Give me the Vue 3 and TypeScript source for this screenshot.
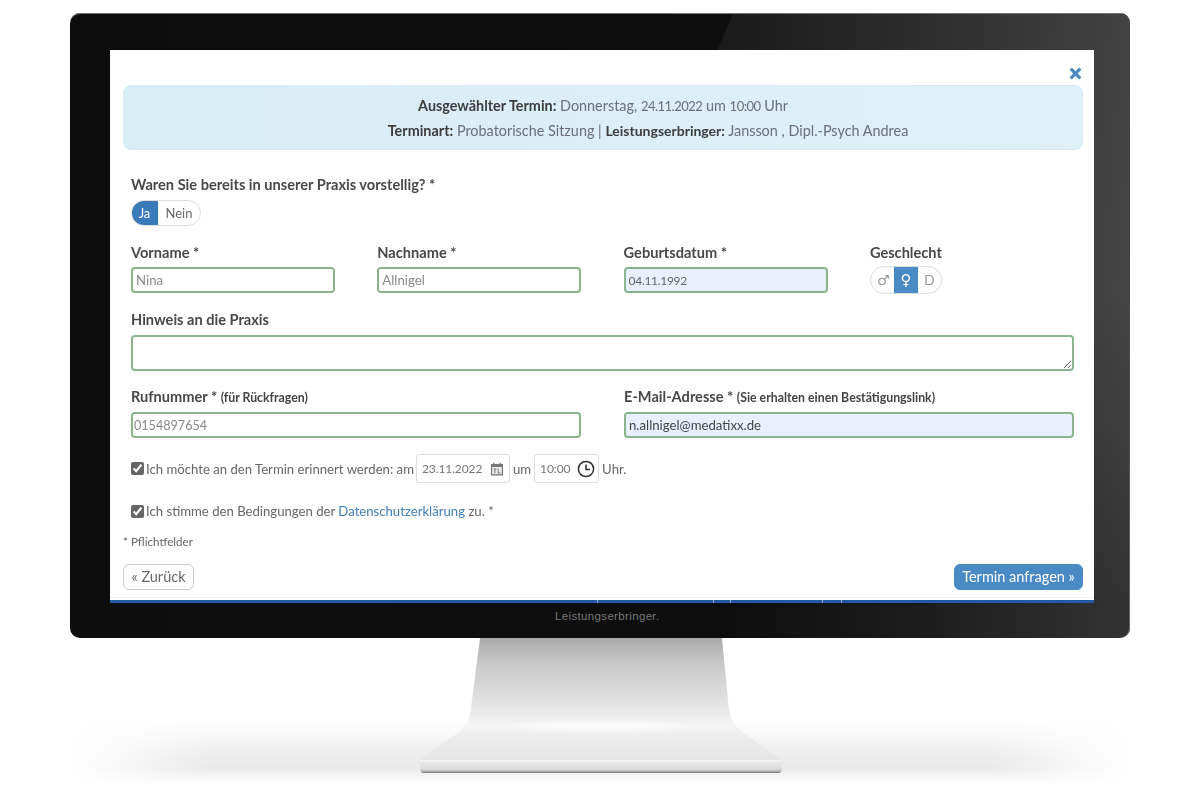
<script setup lang="ts">
const firstRow = [
  { label: 'Vorname *', value: 'Nina', filled: false, date: false },
  { label: 'Nachname *', value: 'Allnigel', filled: false, date: false },
  { label: 'Geburtsdatum *', value: '04.11.1992', filled: true, date: true },
]
const ticks = [487, 603, 620, 712, 731]
</script>

<template>
  <div class="page">
    <div class="desk-shadow"></div>
    <div class="monitor">
      <div class="glare"></div>
      <main class="screen">
        <div class="close-row">
          <svg class="close" viewBox="0 0 14 14" aria-label="Schließen">
            <path d="M1.5 3.6 3.6 1.5 7 4.9 10.4 1.5 12.5 3.6 9.1 7 12.5 10.4 10.4 12.5 7 9.1 3.6 12.5 1.5 10.4 4.9 7 1.5 3.6Z" />
          </svg>
        </div>
        <section class="alert">
          <p><b>Ausgewählter Termin:</b> Donnerstag, <span class="num">24.11.2022</span> um <span class="num">10:00</span> Uhr</p>
          <p class="second"><b>Terminart:</b> Probatorische Sitzung | <b class="small-b">Leistungserbringer:</b> Jansson , Dipl.-Psych Andrea</p>
        </section>

        <form class="form" @submit.prevent>
          <div class="label question">Waren Sie bereits in unserer Praxis vorstellig? *</div>
          <div class="pill yesno">
            <span class="opt on ja">Ja</span>
            <span class="opt nein">Nein</span>
          </div>

          <div class="grid four">
            <div v-for="f in firstRow" :key="f.label" class="field">
              <label class="label">{{ f.label }}</label>
              <input class="input" :class="{ filled: f.filled, digits: f.date }" :value="f.value" />
            </div>
            <div class="field">
              <label class="label">Geschlecht</label>
              <div class="pill gender">
                <span class="opt g male">♂</span>
                <span class="opt g on">♀</span>
                <span class="opt g d">D</span>
              </div>
            </div>
          </div>

          <div class="field note">
            <label class="label">Hinweis an die Praxis</label>
            <textarea class="input area"></textarea>
          </div>

          <div class="grid two">
            <div class="field">
              <label class="label">Rufnummer * <small>(für Rückfragen)</small></label>
              <input class="input digits phone" value="0154897654" />
            </div>
            <div class="field">
              <label class="label">E-Mail-Adresse * <small>(Sie erhalten einen Bestätigungslink)</small></label>
              <input class="input filled dark" value="n.allnigel@medatixx.de" />
            </div>
          </div>

          <div class="check-row remind">
            <input type="checkbox" checked />
            <span class="remind-text">Ich möchte an den Termin erinnert werden: am</span>
            <div class="picker date">
              <span>23.11.2022</span>
              <svg viewBox="0 0 14 14" class="cal">
                <path d="M1 2h2V.8h1.4V2h5.2V.8H11V2h2v11.4H1z" fill="#777" />
                <path d="M2.2 5h9.6v7.2H2.2z" fill="#eee" />
                <path d="M3.6 6.4h2.8v1H5.4v4H4.4V7.4H3.6zM7.6 6.4h1v4h2v1h-3z" fill="#777" />
              </svg>
            </div>
            <span>um</span>
            <div class="picker time">
              <span>10:00</span>
              <svg viewBox="0 0 18 18" class="clock">
                <circle cx="9" cy="9" r="7.6" fill="none" stroke="#333" stroke-width="1.5" />
                <path d="M9 4.4V9.6H13" fill="none" stroke="#333" stroke-width="1.5" />
              </svg>
            </div>
            <span>Uhr.</span>
          </div>

          <div class="check-row consent">
            <input type="checkbox" checked />
            <span>Ich stimme den Bedingungen der <a href="#" @click.prevent>Datenschutzerklärung</a> zu. *</span>
          </div>
        </form>

        <div class="required">* Pflichtfelder</div>

        <div class="actions">
          <button class="btn back" type="button">« Zurück</button>
          <button class="btn next" type="button">Termin anfragen »</button>
        </div>
        <div class="edge">
          <i v-for="t in ticks" :key="t" class="tick" :style="{ left: t + 'px' }"></i>
        </div>
      </main>
      <div class="caption">Leistungserbringer.</div>
    </div>

    <svg class="stand" viewBox="0 0 400 150" aria-hidden="true">
      <defs>
        <linearGradient id="neck" x1="0" y1="0" x2="0" y2="1">
          <stop offset="0" stop-color="#a9a9a9" />
          <stop offset="0.2" stop-color="#c8c8c8" />
          <stop offset="0.5" stop-color="#e0e0e0" />
          <stop offset="0.72" stop-color="#f5f5f5" />
          <stop offset="0.82" stop-color="#ececec" />
          <stop offset="1" stop-color="#e6e6e6" />
        </linearGradient>
        <linearGradient id="base" x1="0" y1="0" x2="0" y2="1">
          <stop offset="0" stop-color="#f8f8f8" />
          <stop offset="0.2" stop-color="#e8e8e8" />
          <stop offset="0.7" stop-color="#dcdcdc" />
          <stop offset="0.9" stop-color="#aaa" />
          <stop offset="1" stop-color="#666" />
        </linearGradient>
        <radialGradient id="shine" cx="0.5" cy="0.5" r="0.5">
          <stop offset="0" stop-color="#fff" stop-opacity="0.9" />
          <stop offset="1" stop-color="#fff" stop-opacity="0" />
        </radialGradient>
      </defs>
      <path d="M61 0H303L309 62C310 76 312 84 322 93L363 122H1L40 94C50 86 51 78 53 62Z" fill="url(#neck)" />
      <ellipse cx="181" cy="88" rx="105" ry="8" fill="url(#shine)" />
      <path d="M1 122H363V130C363 133 362 135 359 135H5C2 135 1 133 1 130Z" fill="url(#base)" />
    </svg>
  </div>
</template>

<style>
html, body { margin: 0; background: #fff; }
</style>

<style scoped>
.page {
  position: relative;
  width: 1200px;
  height: 800px;
  box-sizing: border-box;
  padding-top: 13px;
  overflow: hidden;
  background: #fff;
  font-family: Lato, "Open Sans", sans-serif;
  color: #666;
}
.desk-shadow {
  position: absolute;
  left: 70px;
  top: 715px;
  width: 1060px;
  height: 85px;
  background: linear-gradient(180deg, #fff 5%, #ededed 50%, #eaeaea 62%, #fff 82%);
  -webkit-mask-image: linear-gradient(90deg, transparent 0, #000 13%, #000 87%, transparent 100%);
  mask-image: linear-gradient(90deg, transparent 0, #000 13%, #000 87%, transparent 100%);
}
.monitor {
  position: relative;
  box-sizing: border-box;
  width: 1060px;
  height: 625px;
  margin-left: 70px;
  padding: 37px 36px 0 40px;
  border-radius: 10px;
  box-shadow: inset 0 1px #777, inset -1px 0 #666;
  background: linear-gradient(90deg, #0d0d0d 0%, #0e0e0e 62%, #1c1c1c 80%, #333 100%);
  overflow: hidden;
}
.glare {
  position: absolute;
  left: 640px;
  right: 0;
  top: 1px;
  bottom: 0;
  background: linear-gradient(95deg, #191919 0%, #2f2f2f 50%, #484848 100%);
  clip-path: polygon(23px 0, 100% 0, 100% 100%, 0 100%, 0 53px);
  -webkit-mask-image: linear-gradient(180deg, #000 45%, transparent 95%);
  mask-image: linear-gradient(180deg, #000 45%, transparent 95%);
}
.screen {
  position: relative;
  box-sizing: border-box;
  width: 984px;
  height: 552px;
  padding: 0 11px 0 13px;
  background: #fff;
  display: flex;
  flex-direction: column;
  filter: blur(0.35px);
}
.close-row {
  height: 35px;
  display: flex;
  justify-content: flex-end;
  align-items: flex-end;
}
.close {
  width: 15px;
  height: 15px;
  margin: 0 0 4px;
  fill: #4a89c2;
}
.alert {
  box-sizing: border-box;
  height: 65px;
  padding: 8px 0;
  border-radius: 8px;
  background: linear-gradient(90deg, #d9edf6, #dff0f8);
  border: 1px solid #d4eaf5;
  text-align: center;
  font-size: 14.4px;
  line-height: 23.5px;
  color: #6a7076;
}
.alert p { margin: 0; }
.alert .second { padding-left: 90px; }
.alert b { color: #3d3d3d; }
.alert .small-b { font-size: 14px; }
.num { font-size: 13px; letter-spacing: -0.5px; }
.form { padding: 0 9px 0 8px; }
.label {
  display: block;
  font-weight: 700;
  font-size: 14.6px;
  line-height: 18px;
  color: #484848;
}
.label small {
  font-size: 12.3px;
  color: #444;
}
.question { margin-top: 26px; }
.pill {
  display: inline-flex;
  box-sizing: border-box;
  height: 26px;
  border: 1px solid #ddd;
  border-radius: 14px;
  overflow: hidden;
  font-size: 13px;
  line-height: 24px;
  color: #666;
}
.yesno { margin-top: 6px; display: flex; width: 70px; }
.opt { display: block; text-align: center; }
.opt.on { background: #397ab8; color: #fff; }
.ja { width: 27px; margin: -1px 0 -1px -1px; line-height: 26px; }
.nein { flex: 1; }
.grid { display: grid; column-gap: 42.3px; }
.four {
  grid-template-columns: 204px 204px 204px 1fr;
  margin-top: 18px;
}
.two {
  grid-template-columns: 450px 450px;
  column-gap: 43px;
  margin-top: 17px;
}
.field { display: flex; flex-direction: column; align-items: flex-start; }
.input {
  box-sizing: border-box;
  width: 100%;
  height: 26px;
  margin-top: 5px;
  padding: 0 3px;
  border: 2px solid #8ab58e;
  border-radius: 4px;
  background: #fff;
  outline: none;
  font: 13.2px Lato, "Open Sans", sans-serif;
  color: #888;
}
.note .input { margin-top: 6px; }
.digits { font-size: 12px; letter-spacing: -0.3px; }
.phone { font-size: 12.6px; letter-spacing: 0; padding-left: 1px; }
.filled { background: #e8f0fe; color: #666; }
.dark { color: #444; }
.gender { margin-top: 4px; height: 28px; width: 72px; display: flex; }
.g { flex: 1; margin: -1px 0; line-height: 28px; font-family: "DejaVu Sans", sans-serif; font-size: 14px; color: #999; }
.g.on { flex: 0 0 24px; background: #4a8ac4; color: #fff; font-size: 15px; }
.male { flex: 0 0 23px; padding-left: 2px; box-sizing: border-box; }
.d { font-family: Lato, sans-serif; font-size: 14px; }
.note { margin-top: 17px; }
.area {
  height: 36px;
  resize: vertical;
  display: block;
}
.check-row {
  display: flex;
  align-items: center;
  font-size: 13.15px;
  color: #666;
}
.check-row input {
  width: 13px;
  height: 13px;
  margin: 0 2px 0 0;
  accent-color: #666;
}
.check-row a { color: #3f7fb8; text-decoration: none; }
.remind { margin-top: 16px; height: 29px; }
.remind-text { margin-right: 2px; }
.picker {
  box-sizing: border-box;
  height: 29px;
  border: 1px solid #ddd;
  border-radius: 3px;
  display: flex;
  align-items: center;
  color: #777;
  font-size: 12px;
  letter-spacing: -0.1px;
}
.date { width: 94px; padding: 0 5px; justify-content: space-between; margin-right: 3px; }
.time { width: 65px; padding: 0 3px 0 5px; justify-content: space-between; margin: 0 3px; }
.cal { width: 14px; height: 14px; }
.clock { width: 18px; height: 18px; }
.consent { margin-top: 18px; height: 20px; }
.required {
  margin-top: 13px;
  font-size: 11.6px;
  line-height: 16px;
  color: #666;
}
.actions {
  margin-top: 14px;
  display: flex;
  justify-content: space-between;
  align-items: flex-start;
}
.btn {
  box-sizing: border-box;
  height: 26px;
  border-radius: 6px;
  font: 14.5px Lato, "Open Sans", sans-serif;
  padding: 0 0 2px;
}
.back { width: 71px; background: #fff; border: 1px solid #ccc; color: #666; }
.next { width: 129px; background: #4a8ac4; border: 1px solid #4a8ac4; color: #fff; }
.edge {
  position: absolute;
  left: 0;
  right: 0;
  bottom: -1px;
  height: 3px;
  background: #2459a5;
}
.edge::before {
  content: "";
  position: absolute;
  left: 0;
  right: 0;
  top: -3px;
  height: 1px;
  background: #eee;
}
.tick {
  position: absolute;
  top: 0;
  width: 1px;
  height: 3px;
  background: #8fa8c8;
}
.caption {
  position: relative;
  margin-top: 7px;
  margin-left: 445px;
  font: 11.5px "Liberation Sans", sans-serif;
  line-height: 14px;
  letter-spacing: 0.35px;
  color: #777;
}
.stand {
  position: relative;
  display: block;
  width: 400px;
  height: 150px;
  margin-left: 419px;
}
</style>
